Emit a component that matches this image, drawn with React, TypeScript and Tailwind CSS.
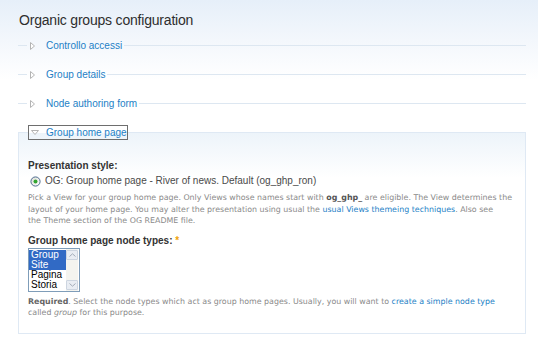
import React from "react";

const RightTri = () => (
  <svg width="7" height="8" viewBox="0 0 7 8" className="shrink-0">
    <path d="M1.5 0.5 L5.5 4 L1.5 7.5 Z" fill="#fff" stroke="#b4b4b4" strokeWidth="1" />
  </svg>
);

const DownTri = () => (
  <svg width="8" height="7" viewBox="0 0 8 7" className="shrink-0">
    <path d="M0.5 1.5 L7.5 1.5 L4 5.5 Z" fill="#fff" stroke="#b4b4b4" strokeWidth="1" />
  </svg>
);

const Collapsed = ({ label }: { label: string }) => (
  <fieldset className="border-0 border-t border-[#dde7f1] m-0 p-0 min-w-0">
    <legend className="ml-[9px] pl-[2px] pr-[2px] flex items-center h-[15px]">
      <RightTri />
      <a className="ml-[10px] text-[10px] leading-[15px] text-[#1d7fc6] cursor-pointer">{label}</a>
    </legend>
  </fieldset>
);

const Radio = () => (
  <svg width="11" height="11" viewBox="0 0 11 11" className="shrink-0">
    <defs>
      <linearGradient id="rg" x1="0" y1="0" x2="1" y2="1">
        <stop offset="0" stopColor="#dcdcd6" />
        <stop offset="1" stopColor="#ffffff" />
      </linearGradient>
    </defs>
    <circle cx="5.5" cy="5.5" r="4.6" fill="url(#rg)" stroke="#3c5f84" strokeWidth="0.9" />
    <circle cx="5.5" cy="5.5" r="2" fill="#32a532" />
  </svg>
);

const ChevUp = () => (
  <svg width="7" height="4" viewBox="0 0 7 4">
    <path d="M0.5 3.5 L3.5 0.8 L6.5 3.5" fill="none" stroke="#a3acb8" strokeWidth="1" />
  </svg>
);
const ChevDown = () => (
  <svg width="7" height="4" viewBox="0 0 7 4">
    <path d="M0.5 0.5 L3.5 3.2 L6.5 0.5" fill="none" stroke="#a3acb8" strokeWidth="1" />
  </svg>
);

export default function App() {
  return (
    <div className="w-[538px] h-[340px] overflow-hidden bg-[linear-gradient(to_bottom,#e6eff9_0px,#f3f7fc_40px,#ffffff_80px)] pl-[18px] pr-[12px] pt-[10px] font-['Liberation_Sans',Arial,sans-serif]">
      <h2 className="text-[14px] leading-[20px] text-[#2e2e2e] tracking-[-0.2px] pl-[1px]">
        Organic groups configuration
      </h2>
      <div className="mt-[8px] flex flex-col gap-[14px]">
        <Collapsed label="Controllo accessi" />
        <Collapsed label="Group details" />
        <Collapsed label="Node authoring form" />
        <fieldset className="m-0 p-0 min-w-0 border border-[#dfe9f4] bg-[linear-gradient(to_bottom,#edf4fa_0px,#ffffff_45px)] pl-[9px] pr-[6px] pb-[14px]">
          <legend className="ml-0 flex items-center h-[15px] border border-[#6e6e6e] bg-transparent pl-[2px] pr-0">
            <DownTri />
            <a className="ml-[7px] text-[10px] leading-[13px] text-[#1d7fc6] cursor-pointer">Group home page</a>
          </legend>
          <div className="pt-[19px]">
            <div className="text-[10px] leading-[14px] font-bold text-[#333]">Presentation style:</div>
            <div className="mt-[1px] flex items-center h-[14px] pl-[2px]">
              <Radio />
              <span className="ml-[4px] text-[10px] leading-[14px] text-[#4a4a4a]">
                OG: Group home page - River of news. Default (og_ghp_ron)
              </span>
            </div>
            <p className="mt-[4px] font-['DejaVu_Sans',Verdana,sans-serif] text-[7.9px] leading-[11.5px] text-[#8a8a8a] whitespace-nowrap">
              Pick a View for your group home page. Only Views whose names start with{" "}
              <b className="text-[#555]">og_ghp_</b> are eligible. The View determines the
              <br />
              layout of your home page. You may alter the presentation using usual the{" "}
              <a className="text-[#1d7fc6]">usual Views themeing techniques</a>. Also see
              <br />
              the Theme section of the OG README file.
            </p>
            <div className="mt-[7px] text-[10px] leading-[14px] font-bold text-[#333]">
              Group home page node types: <span className="text-[#f0a30a]">*</span>
            </div>
            <div className="w-[52px] h-[44px] border border-[#7f9db9] bg-white flex">
              <div className="w-[37px] pt-[1px] flex flex-col text-[10px] leading-[10px] text-black">
                <div className="bg-[#316ac5] text-white pl-[2px]">Group</div>
                <div className="bg-[#316ac5] text-white pl-[2px]">Site</div>
                <div className="pl-[2px]">Pagina</div>
                <div className="pl-[2px]">Storia</div>
              </div>
              <div className="w-[12px] pt-[1px] pb-[1px] flex flex-col justify-between bg-[#f4f4ef]">
                <div className="h-[10px] rounded-[1px] border border-[#cdd5e0] bg-[#e9edf3] flex items-center justify-center">
                  <ChevUp />
                </div>
                <div className="h-[10px] rounded-[1px] border border-[#cdd5e0] bg-[#e9edf3] flex items-center justify-center">
                  <ChevDown />
                </div>
              </div>
            </div>
            <p className="mt-[4px] font-['DejaVu_Sans',Verdana,sans-serif] text-[7.9px] leading-[11.5px] text-[#8a8a8a] whitespace-nowrap">
              <b className="text-[#666]">Required</b>. Select the node types which act as group home pages. Usually,
              you will want to <a className="text-[#1d7fc6]">create a simple node type</a>
              <br />
              called <i>group</i> for this purpose.
            </p>
          </div>
        </fieldset>
      </div>
    </div>
  );
}
